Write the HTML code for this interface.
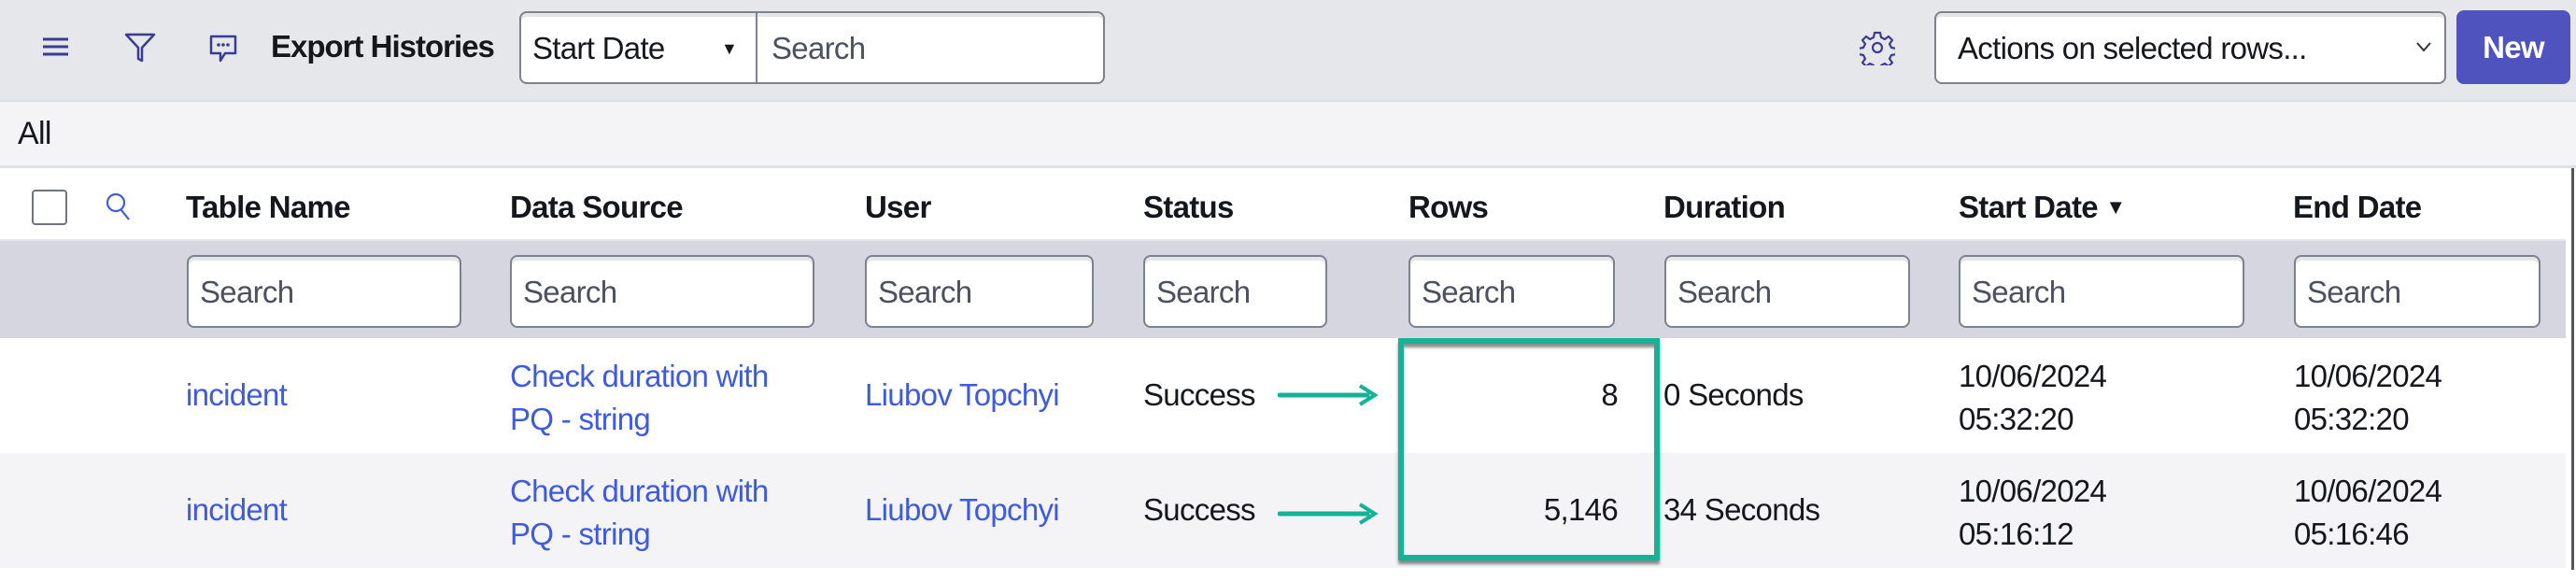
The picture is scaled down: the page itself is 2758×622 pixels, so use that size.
<!DOCTYPE html>
<html><head><meta charset="utf-8"><style>
*{box-sizing:border-box;margin:0;padding:0}
body{width:2758px;height:622px;background:#fff;font-family:"Liberation Sans",sans-serif;color:#16171d;position:relative;overflow:hidden;font-size:33px;letter-spacing:-0.7px}
.a{position:absolute;white-space:nowrap}
.inp{position:absolute;background:#fff;border:2px solid #7d828f;border-radius:8px;box-shadow:inset 0 4px 0 #e4e6e8}
.ph{color:#4b5160}
.lk{color:#3d5ae0}
.b{font-weight:bold}
</style></head><body>
<div class="a" style="left:0;top:0;width:2758px;height:107px;background:#e6e7eb"></div>
<div class="a" style="left:0;top:107px;width:2758px;height:73px;background:#f4f4f6;border-top:2px solid #dcdde2;border-bottom:3px solid #e0e1e5"></div>
<div class="a" style="left:0;top:180px;width:2747px;height:78px;background:#fff;border-bottom:2px solid #e4e5ea"></div>
<div class="a" style="left:0;top:258px;width:2747px;height:104px;background:#d5d6df"></div>
<div class="a" style="left:0;top:485px;width:2747px;height:123px;background:#f4f4f6"></div>
<div class="a" style="left:2753px;top:180px;width:3px;height:430px;background:#555"></div>

<svg class="a" style="left:44px;top:38px" width="32" height="24" viewBox="0 0 32 24"><g stroke="#3a3d8f" stroke-width="3"><line x1="2" y1="4" x2="29" y2="4"/><line x1="2" y1="12" x2="29" y2="12"/><line x1="2" y1="20" x2="29" y2="20"/></g></svg>
<svg class="a" style="left:132px;top:34px" width="36" height="34" viewBox="0 0 36 34"><path d="M3 3H33L20 17V31L16 29V17Z" fill="none" stroke="#3a3d8f" stroke-width="2.5" stroke-linejoin="round"/></svg>
<svg class="a" style="left:222px;top:36px" width="34" height="32" viewBox="0 0 34 32"><path d="M4 3H30V21H19L14 29V21H4Z" fill="none" stroke="#3a3d8f" stroke-width="2.5" stroke-linejoin="round"/><circle cx="12" cy="12" r="1.8" fill="#3a3d8f"/><circle cx="17" cy="12" r="1.8" fill="#3a3d8f"/><circle cx="22" cy="12" r="1.8" fill="#3a3d8f"/></svg>
<div class="a b" style="left:290px;top:31px;font-size:33px;letter-spacing:-1px">Export Histories</div>
<div class="inp" style="left:556px;top:12px;width:627px;height:78px"></div>
<div class="a" style="left:809px;top:14px;width:2px;height:74px;background:#7d828f"></div>
<div class="a" style="left:570px;top:33px">Start Date</div>
<div class="a" style="left:772px;top:42px;font-size:18px">▼</div>
<div class="a ph" style="left:826px;top:33px">Search</div>
<svg class="a" style="left:1991px;top:32px" width="38" height="38" viewBox="0 0 38 38"><path d="M16 3h6l1 5 4 2 4-3 4 4-3 4 2 4 5 1v6l-5 1-2 4 3 4-4 4-4-3-4 2-1 5h-6l-1-5-4-2-4 3-4-4 3-4-2-4-5-1v-6l5-1 2-4-3-4 4-4 4 3 4-2z" fill="none" stroke="#3a3d8f" stroke-width="2.2" stroke-linejoin="round"/><circle cx="19" cy="19" r="5" fill="none" stroke="#3a3d8f" stroke-width="2.2"/></svg>
<div class="inp" style="left:2071px;top:12px;width:548px;height:78px"></div>
<div class="a" style="left:2096px;top:33px">Actions on selected rows...</div>
<svg class="a" style="left:2587px;top:44px" width="16" height="12" viewBox="0 0 16 12"><path d="M1 2L8 10L15 2" fill="none" stroke="#333" stroke-width="2"/></svg>
<div class="a" style="left:2630px;top:11px;width:122px;height:79px;background:#4f53bd;border-radius:8px"></div>
<div class="a b" style="left:2630px;top:32px;width:122px;text-align:center;color:#fff">New</div>

<div class="a" style="left:19px;top:124px;font-size:34px">All</div>

<div class="a" style="left:34px;top:203px;width:38px;height:38px;border:2px solid #6f7480;border-radius:4px;background:#fff"></div>
<svg class="a" style="left:111px;top:204px" width="34" height="34" viewBox="0 0 34 34"><circle cx="13" cy="13" r="9" fill="none" stroke="#3d5ae0" stroke-width="2.2"/><line x1="19" y1="21" x2="27" y2="31" stroke="#3d5ae0" stroke-width="2.2"/></svg>
<div class="a b" style="left:199px;top:203px">Table Name</div>
<div class="a b" style="left:546px;top:203px">Data Source</div>
<div class="a b" style="left:926px;top:203px">User</div>
<div class="a b" style="left:1224px;top:203px">Status</div>
<div class="a b" style="left:1508px;top:203px">Rows</div>
<div class="a b" style="left:1781px;top:203px">Duration</div>
<div class="a b" style="left:2097px;top:203px">Start Date <span style="font-size:22px;position:relative;top:-4px">▼</span></div>
<div class="a b" style="left:2455px;top:203px">End Date</div>

<div class="inp" style="left:200px;top:273px;width:294px;height:78px"></div><div class="a ph" style="left:214px;top:294px">Search</div>
<div class="inp" style="left:546px;top:273px;width:326px;height:78px"></div><div class="a ph" style="left:560px;top:294px">Search</div>
<div class="inp" style="left:926px;top:273px;width:245px;height:78px"></div><div class="a ph" style="left:940px;top:294px">Search</div>
<div class="inp" style="left:1224px;top:273px;width:197px;height:78px"></div><div class="a ph" style="left:1238px;top:294px">Search</div>
<div class="inp" style="left:1508px;top:273px;width:221px;height:78px"></div><div class="a ph" style="left:1522px;top:294px">Search</div>
<div class="inp" style="left:1782px;top:273px;width:263px;height:78px"></div><div class="a ph" style="left:1796px;top:294px">Search</div>
<div class="inp" style="left:2097px;top:273px;width:306px;height:78px"></div><div class="a ph" style="left:2111px;top:294px">Search</div>
<div class="inp" style="left:2456px;top:273px;width:264px;height:78px"></div><div class="a ph" style="left:2470px;top:294px">Search</div>

<div class="a lk" style="left:199px;top:404px">incident</div>
<div class="a lk" style="left:546px;top:380px;line-height:46px">Check duration with<br>PQ - string</div>
<div class="a lk" style="left:926px;top:404px">Liubov Topchyi</div>
<div class="a" style="left:1224px;top:404px">Success</div>
<div class="a" style="left:1582px;top:404px;width:150px;text-align:right">8</div>
<div class="a" style="left:1781px;top:404px">0 Seconds</div>
<div class="a" style="left:2097px;top:380px;line-height:46px">10/06/2024<br>05:32:20</div>
<div class="a" style="left:2456px;top:380px;line-height:46px">10/06/2024<br>05:32:20</div>

<div class="a lk" style="left:199px;top:527px">incident</div>
<div class="a lk" style="left:546px;top:503px;line-height:46px">Check duration with<br>PQ - string</div>
<div class="a lk" style="left:926px;top:527px">Liubov Topchyi</div>
<div class="a" style="left:1224px;top:527px">Success</div>
<div class="a" style="left:1582px;top:527px;width:150px;text-align:right">5,146</div>
<div class="a" style="left:1781px;top:527px">34 Seconds</div>
<div class="a" style="left:2097px;top:503px;line-height:46px">10/06/2024<br>05:16:12</div>
<div class="a" style="left:2456px;top:503px;line-height:46px">10/06/2024<br>05:16:46</div>

<div class="a" style="left:1497px;top:362px;width:280px;height:238px;border:6px solid #14b398;box-shadow:0 4px 3px rgba(0,0,0,.45), inset 0 6px 3px -2px rgba(0,0,0,.45)"></div>
<svg class="a" style="left:1368px;top:408px" width="108" height="30" viewBox="0 0 108 30"><line x1="2" y1="15" x2="96" y2="15" stroke="#14b398" stroke-width="5" stroke-linecap="round"/><path d="M88 5L104 15L88 25" fill="none" stroke="#14b398" stroke-width="4"/></svg>
<svg class="a" style="left:1368px;top:535px" width="108" height="30" viewBox="0 0 108 30"><line x1="2" y1="15" x2="96" y2="15" stroke="#14b398" stroke-width="5" stroke-linecap="round"/><path d="M88 5L104 15L88 25" fill="none" stroke="#14b398" stroke-width="4"/></svg>
</body></html>
